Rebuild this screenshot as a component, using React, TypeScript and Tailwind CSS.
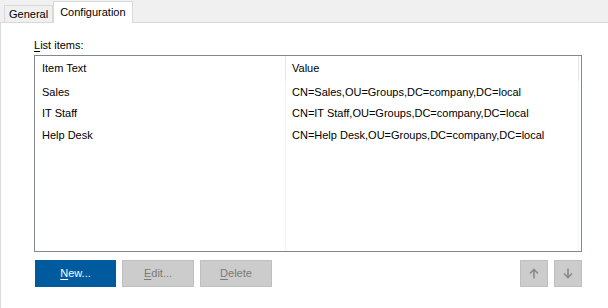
const rows = [
  { text: 'Sales', value: 'CN=Sales,OU=Groups,DC=company,DC=local' },
  { text: 'IT Staff', value: 'CN=IT Staff,OU=Groups,DC=company,DC=local' },
  { text: 'Help Desk', value: 'CN=Help Desk,OU=Groups,DC=company,DC=local' },
];

const ArrowUp = () => (
  <svg width="10" height="11" viewBox="0 0 10 11" fill="none" stroke="#8a8a8a" strokeWidth="1.6">
    <path d="M5 10.5V1.5M1 5.5l4-4 4 4" />
  </svg>
);

const ArrowDown = () => (
  <svg width="10" height="11" viewBox="0 0 10 11" fill="none" stroke="#8a8a8a" strokeWidth="1.6">
    <path d="M5 0.5v9M1 5.5l4 4 4-4" />
  </svg>
);

export default function App() {
  return (
    <div
      className="w-[608px] h-[308px] bg-white flex flex-col overflow-hidden text-[11px] text-black"
      style={{ fontFamily: '"Liberation Sans", Arial, sans-serif' }}
    >
      {/* tab strip */}
      <div className="h-[23px] bg-[#f0f0f0] flex items-end pl-[4px] border-b border-[#d9d9d9] shrink-0">
        <div className="h-[17px] px-[4px] flex items-center border border-b-0 border-[#d9d9d9] bg-[#f0f0f0] leading-none">
          General
        </div>
        <div className="h-[22px] -mb-px px-[6px] flex items-center border border-b-0 border-[#d9d9d9] bg-white leading-none">
          Configuration
        </div>
      </div>

      {/* page */}
      <div className="flex-1 border-l border-[#d9d9d9] pl-[33px] pr-[26px] pt-[13px] flex flex-col">
        <div className="h-[19px] leading-[19px]">
          <span className="underline underline-offset-2">L</span>ist items:
        </div>

        <div className="h-[197px] border border-[#828790] flex flex-col relative">
          <div className="flex h-[25px] items-center">
            <div className="w-[251px] pl-[7px] h-full flex items-center border-r border-[#e5e5e5]">Item Text</div>
            <div className="flex-1 pl-[6px] h-full flex items-center border-r border-[#e5e5e5] mr-[2px]">Value</div>
          </div>
          <div className="flex-1 flex">
            <div className="w-[251px] border-r border-[#f0f5fb] flex flex-col">
              {rows.map((r) => (
                <div key={r.text} className="h-[21.5px] pl-[7px] flex items-center">
                  {r.text}
                </div>
              ))}
            </div>
            <div className="flex-1 border-r border-[#f0f5fb] mr-[2px] flex flex-col">
              {rows.map((r) => (
                <div key={r.text} className="h-[21.5px] pl-[6px] flex items-center whitespace-nowrap">
                  {r.value}
                </div>
              ))}
            </div>
          </div>
        </div>

        <div className="flex mt-[8px] gap-[6px]">
          <button className="w-[81px] h-[27px] bg-[#005a9e] text-white ml-px">
            <span className="underline underline-offset-2">N</span>ew...
          </button>
          <button className="w-[72px] h-[27px] bg-[#cccccc] border border-[#bfbfbf] text-[#7a7a7a]">
            <span className="underline underline-offset-2">E</span>dit...
          </button>
          <button className="w-[72px] h-[27px] bg-[#cccccc] border border-[#bfbfbf] text-[#7a7a7a]">
            <span className="underline underline-offset-2">D</span>elete
          </button>
          <div className="flex-1" />
          <button className="w-[28px] h-[27px] bg-[#cccccc] border border-[#bfbfbf] flex items-center justify-center">
            <ArrowUp />
          </button>
          <button className="w-[28px] h-[27px] bg-[#cccccc] border border-[#bfbfbf] flex items-center justify-center">
            <ArrowDown />
          </button>
        </div>
      </div>
    </div>
  );
}
